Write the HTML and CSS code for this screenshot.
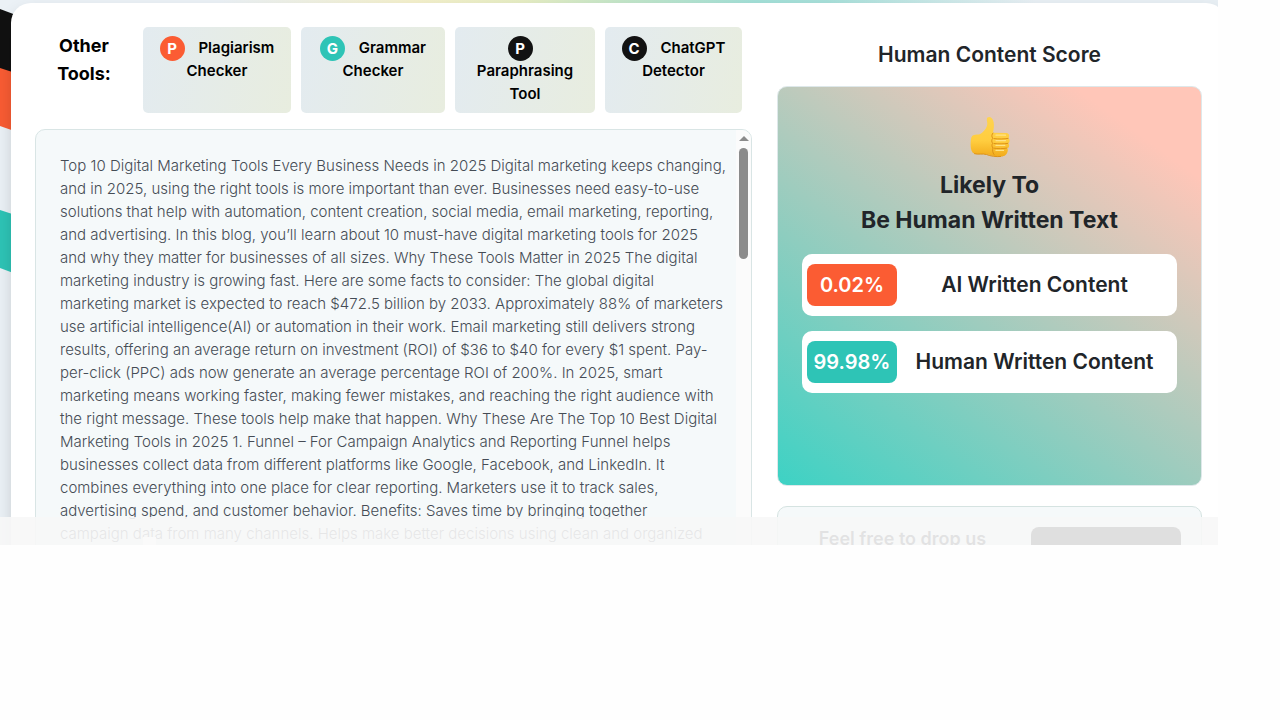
FILE: index.html
```html
<!DOCTYPE html>
<html lang="en">
<head>
    <meta charset="UTF-8">
    <meta name="viewport" content="width=device-width, initial-scale=1.0">
    <title>Human Content Score</title>
    <link rel="stylesheet" href="styles.css">
</head>
<body>
    <div class="page">
        <!-- coloured stripes behind the card -->
        <svg class="stripes" viewBox="0 0 40 280" aria-hidden="true">
            <path fill="#111" d="M0 9l40 15v60L0 69z"/>
            <path fill="#f95c33" d="M0 68l40 13v59L0 126z"/>
            <path fill="#2ec4b6" d="M0 210l40 13v60L0 268z"/>
        </svg>

        <main class="card">
            <section class="left">
                <nav class="tools">
                    <h2 class="tools-title">Other Tools:</h2>
                    <a class="tool tool-lg" href="#">
                        <span class="tool-icon orange">P</span>
                        Plagiarism<br>Checker
                    </a>
                    <a class="tool tool-md" href="#">
                        <span class="tool-icon teal">G</span>
                        Grammar<br>Checker
                    </a>
                    <a class="tool tool-sm" href="#">
                        <span class="tool-icon black">P</span>
                        <br>Paraphrasing<br>Tool
                    </a>
                    <a class="tool tool-xs" href="#">
                        <span class="tool-icon black">C</span>
                        ChatGPT<br>Detector
                    </a>
                </nav>

                <div class="text-box">
                    <p class="text">
                        Top 10 Digital Marketing Tools Every Business Needs in 2025 Digital marketing keeps changing,<br>
                        and in 2025, using the right tools is more important than ever. Businesses need easy-to-use<br>
                        solutions that help with automation, content creation, social media, email marketing, reporting,<br>
                        and advertising. In this blog, you’ll learn about 10 must-have digital marketing tools for 2025<br>
                        and why they matter for businesses of all sizes. Why These Tools Matter in 2025 The digital<br>
                        marketing industry is growing fast. Here are some facts to consider: The global digital<br>
                        marketing market is expected to reach $472.5 billion by 2033. Approximately 88% of marketers<br>
                        use artificial intelligence(AI) or automation in their work. Email marketing still delivers strong<br>
                        results, offering an average return on investment (ROI) of $36 to $40 for every $1 spent. Pay-<br>
                        per-click (PPC) ads now generate an average percentage ROI of 200%. In 2025, smart<br>
                        marketing means working faster, making fewer mistakes, and reaching the right audience with<br>
                        the right message. These tools help make that happen. Why These Are The Top 10 Best Digital<br>
                        Marketing Tools in 2025 1. Funnel – For Campaign Analytics and Reporting Funnel helps<br>
                        businesses collect data from different platforms like Google, Facebook, and LinkedIn. It<br>
                        combines everything into one place for clear reporting. Marketers use it to track sales,<br>
                        advertising spend, and customer behavior. Benefits: Saves time by bringing together<br>
                        campaign data from many channels. Helps make better decisions using clean and organized
                    </p>
                    <div class="scrollbar">
                        <div class="scroll-up"></div>
                        <div class="scroll-thumb"></div>
                    </div>
                </div>
            </section>

            <section class="right">
                <h2 class="score-title">Human Content Score</h2>
                <div class="score">
                    <svg class="thumb" viewBox="0 0 42 42" aria-hidden="true">
                        <defs>
                            <linearGradient id="skin" x1="0" y1="0" x2="0" y2="1">
                                <stop offset="0" stop-color="#ffd34f"/>
                                <stop offset=".6" stop-color="#ffcd3f"/>
                                <stop offset="1" stop-color="#f2ab1c"/>
                            </linearGradient>
                        </defs>
                        <path fill="url(#skin)" d="M18.500 1.600c2.200-1.500 5.200.2 6.100 4.400.7 3.500.1 7.500-.7 10.800l13.200.2c2.200.1 3.200 1.500 3.100 3 0 1-.4 1.800-1 2.300 1 .6 1.500 1.500 1.400 2.600-.1 1.200-.7 2-1.500 2.500.8.6 1.200 1.500 1 2.500-.1 1.200-.8 2-1.800 2.500.5.600.7 1.300.5 2.200-.4 2.900-1.900 5.400-5.300 5.800-4.200.4-10-.1-13.400-1.600-2.500-1-5.200-1-8.500-.8-3.500.3-6.300 0-7.800-1.200C1.800 34.500 1.400 30 1.700 25.500c.2-3.500.9-5.800 2.500-6.300 2.400-.8 5.300-.2 7-1.100 3.300-2.100 6.800-5.900 7.100-10.100.1-2.100-1.300-5.100.2-6.400z"/>
                        <g fill="none" stroke="#dd9216" stroke-width="1" stroke-linecap="round">
                            <path d="M24 17c-1.400 1-1.600 4-.2 5.300-1.300 1.200-1.400 3.800-.1 5-1 1.200-1 3.500.3 4.700-.8 1.700-.5 4.600 1 6.500"/>
                            <path d="M25 22.600c4 .7 10.500.4 14.100-.2M25 27.500c4 .7 10 .5 13.800-.1M25 32.200c3.500.7 9.400.6 12.600-.1"/>
                            <path d="M5.500 37.700c3.500 1.200 8-.4 12 .8 4 1.700 9.500 2.400 14.200 2"/>
                        </g>
                        <path fill="none" stroke="#ffe387" stroke-width="1.200" stroke-linecap="round" d="M27 19.200h9.500M27 24.600h9.500M27 29.400h8.800M27 34.400h7.500"/>
                    </svg>
                    <h3 class="verdict">Likely To<br>Be Human Written Text</h3>
                    <div class="result">
                        <span class="percent orange">0.02%</span>
                        <span class="result-label">AI Written Content</span>
                    </div>
                    <div class="result">
                        <span class="percent teal">99.98%</span>
                        <span class="result-label">Human Written Content</span>
                    </div>
                </div>

                <div class="feedback">
                    <p class="feedback-text">Feel free to drop us</p>
                    <button class="feedback-btn" type="button" aria-label="Feedback"></button>
                </div>
            </section>
        </main>

        <!-- bar fixed over the bottom of the page -->
        <div class="bottom-bar"><span class="bar-mark"></span></div>
    </div>
</body>
</html>
```

FILE: styles.css
```css
* {
    box-sizing: border-box;
}
body {
    margin: 0;
    font-family: Inter, "Open Sans", sans-serif;
    color: #212529;
    background: #fefefe;
}
h2, h3, p {
    margin: 0;
}

.page {
    position: relative;
    display: flow-root;
    max-height: 545px;
    margin-right: 62px;
    overflow: hidden;
    background: linear-gradient(90deg, #ebf1f6 18%, #f4f0cc 34%, #e6edc4 43%, #c4e6c9 51%, #a3e0d8 62%, #a8e0da 68%, #e8eff4 85%);
}
.stripes {
    position: absolute;
    top: 0;
    left: 0;
    width: 40px;
    height: 280px;
}

.card {
    position: relative;
    display: grid;
    grid-template-columns: 717fr 425fr;
    gap: 25px;
    margin: 3px -8px 0 11px;
    padding: 24px;
    border-radius: 20px;
    background: #fff;
    box-shadow: 0 8px 16px rgba(0, 0, 0, 0.15);
}

/* tools */
.tools {
    display: flex;
    gap: 10px;
    padding-right: 10px;
    margin-bottom: 16px;
}
.tools-title {
    width: 98px;
    padding: 5px 16px;
    font-size: 18px;
    font-weight: 700;
    line-height: 28px;
    text-align: center;
    color: #000;
}
.tool {
    min-height: 86px;
    padding-top: 9px;
    border-radius: 5px;
    font-size: 15px;
    font-weight: 600;
    line-height: 23px;
    text-align: center;
    text-decoration: none;
    color: #000;
    background: linear-gradient(100deg, #e3ebf0, #e8eddf);
}
.tool-lg { flex: 148 0 0; }
.tool-md { flex: 144 0 0; }
.tool-sm { flex: 140 0 0; }
.tool-xs { flex: 137 0 0; }
.tool-icon {
    display: inline-block;
    width: 25px;
    height: 25px;
    margin: -2px 10px -2px 0;
    border-radius: 50%;
    font-size: 15px;
    font-weight: 700;
    line-height: 25px;
    vertical-align: middle;
    color: #fff;
}
.orange { background: #fb5c33; }
.teal { background: #2ec4b6; }
.black { background: #121212; }

/* checked text */
.text-box {
    display: flex;
    justify-content: space-between;
    overflow: hidden;
    border: 1px solid #d9e5e5;
    border-radius: 10px;
    background: #f5f9fa;
}
.text {
    padding: 24px 0 24px 24px;
    font-size: 15px;
    font-weight: 300;
    line-height: 23px;
    white-space: nowrap;
    color: #454c55;
}
.scrollbar {
    display: flex;
    flex-direction: column;
    align-items: center;
    gap: 7px;
    width: 15px;
    padding-top: 6px;
    background: #fbfbfb;
}
.scroll-up {
    border: 5px solid transparent;
    border-top: 0;
    border-bottom-color: #8b8b8b;
}
.scroll-thumb {
    width: 9px;
    height: 111px;
    border-radius: 5px;
    background: #8b8b8b;
}

/* score */
.score-title {
    padding: 13px 0 16px;
    font-size: 21px;
    font-weight: 600;
    line-height: 30px;
    text-align: center;
}
.score {
    min-height: 400px;
    padding: 29px 24px;
    border: 1px solid #dee8ea;
    border-radius: 10px;
    background: linear-gradient(36deg, #3dd2c4, #ffc6b8 87%);
}
.thumb {
    display: block;
    width: 42px;
    height: 42px;
    margin: 0 auto 10px;
}
.verdict {
    margin-bottom: 16px;
    font-size: 23px;
    font-weight: 700;
    line-height: 35px;
    text-align: center;
}
.result {
    display: flex;
    align-items: center;
    margin-bottom: 15px;
    padding: 10px 5px;
    border-radius: 10px;
    background: #fff;
    font-size: 21px;
    font-weight: 600;
    line-height: 42px;
    text-align: center;
}
.percent {
    width: 90px;
    border-radius: 8px;
    font-size: 20px;
    color: #fff;
}
.result-label {
    flex: 1;
}

/* feedback */
.feedback {
    display: flex;
    gap: 24px;
    margin-top: 20px;
    padding: 20px;
    border: 1px solid #d5e3e1;
    border-radius: 10px;
    background: #f5f9fa;
}
.feedback-text {
    flex: 1;
    font-size: 18px;
    font-weight: 600;
    line-height: 23px;
    text-align: center;
}
.feedback-btn {
    width: 150px;
    height: 44px;
    border: none;
    border-radius: 8px;
    background: #000;
}

.bottom-bar {
    position: absolute;
    right: 0;
    bottom: 0;
    left: 0;
    height: 28px;
    background: rgba(247, 247, 247, 0.9);
}
.bar-mark {
    display: block;
    width: 13px;
    height: 8px;
    margin: 20px 0 0 143px;
    background: #fafafa;
}
```
